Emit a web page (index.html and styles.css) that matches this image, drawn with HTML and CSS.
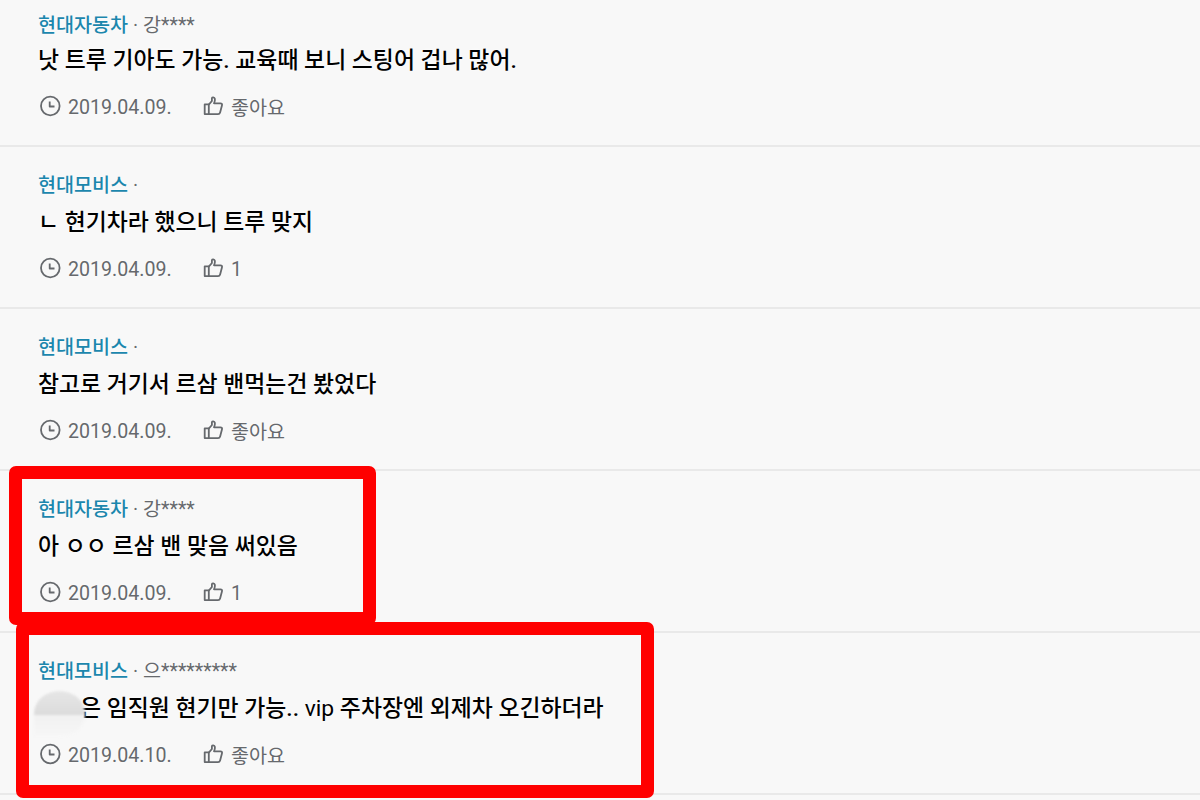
FILE: index.html
```
<!DOCTYPE html>
<html lang="ko">
<head>
    <meta charset="UTF-8">
    <meta name="viewport" content="width=device-width, initial-scale=1.0">
    <title>댓글</title>
    <link rel="stylesheet" href="styles.css">
</head>
<body>
    <!-- Shared icons -->
    <svg class="sprite">
        <symbol id="icon-clock" viewBox="0 0 22 22">
            <circle cx="11.3" cy="11" r="9.3"/>
            <path d="M10.7 6.5v5h4.8"/>
        </symbol>
        <symbol id="icon-like" viewBox="0 0 22 22">
            <path d="M2.7 9.3h4.1v9.8H2.7z"/>
            <path d="M6.8 9.6L9.9 6V3.2c0-1.2 2.6-1.4 3 .8.2 1.4-.2 2.7-.9 4.3h6.4c1.3 0 1.9.9 1.6 2l-1.9 7.1c-.3 1.1-1 1.7-2.1 1.7H6.8"/>
        </symbol>
    </svg>

    <ul class="comments">
        <li class="comment first">
            <p class="writer"><a href="#">현대자동차</a> · 강****</p>
            <p class="text">낫 트루 기아도 가능. 교육때 보니 스팅어 겁나 많어.</p>
            <div class="info">
                <svg class="clock"><use href="#icon-clock"/></svg><span class="date">2019.04.09.</span>
                <svg class="like"><use href="#icon-like"/></svg><span>좋아요</span>
            </div>
        </li>
        <li class="comment">
            <p class="writer"><a href="#">현대모비스</a> ·</p>
            <p class="text">ㄴ 현기차라 했으니 트루 맞지</p>
            <div class="info">
                <svg class="clock"><use href="#icon-clock"/></svg><span class="date">2019.04.09.</span>
                <svg class="like"><use href="#icon-like"/></svg><span class="count">1</span>
            </div>
        </li>
        <li class="comment">
            <p class="writer"><a href="#">현대모비스</a> ·</p>
            <p class="text">참고로 거기서 르삼 밴먹는건 봤었다</p>
            <div class="info">
                <svg class="clock"><use href="#icon-clock"/></svg><span class="date">2019.04.09.</span>
                <svg class="like"><use href="#icon-like"/></svg><span>좋아요</span>
            </div>
        </li>
        <li class="comment">
            <p class="writer"><a href="#">현대자동차</a> · 강****</p>
            <p class="text">아 ㅇㅇ 르삼 밴 맞음 써있음</p>
            <div class="info">
                <svg class="clock"><use href="#icon-clock"/></svg><span class="date">2019.04.09.</span>
                <svg class="like"><use href="#icon-like"/></svg><span class="count">1</span>
            </div>
            <div class="mark mark-short"></div>
        </li>
        <li class="comment">
            <p class="writer"><a href="#">현대모비스</a> · 으*********</p>
            <p class="text erased">은 임직원 현기만 가능.. <span class="latin">vip</span> 주차장엔 외제차 오긴하더라</p>
            <div class="info">
                <svg class="clock"><use href="#icon-clock"/></svg><span class="date">2019.04.10.</span>
                <svg class="like"><use href="#icon-like"/></svg><span>좋아요</span>
            </div>
            <div class="mark mark-long"></div>
        </li>
    </ul>
</body>
</html>
```
FILE: styles.css
```
body {
    font-family: Roboto, "Noto Sans CJK KR", sans-serif;
    background-color: #f8f8f8;
    margin: 0;
    height: 800px;
    overflow: hidden;
}
.sprite {
    display: none;
}
.comments {
    list-style: none;
    margin: 0;
    padding: 0;
}
.comment {
    position: relative;
    box-sizing: border-box;
    height: 162px;
    padding: 23px 38px 0;
    border-bottom: 2px solid #e9e9e9;
    text-shadow: 0 0 3px white;
}
.comment.first {
    height: 147px;
    padding-top: 10px;
}
.comment.first .writer {
    margin-bottom: 1px;
}
.writer {
    margin: 0 0 3px;
    font-size: 19.6px;
    line-height: 32px;
    color: #66696d;
}
.writer a {
    color: #1c87ad;
    font-weight: 500;
    text-decoration: none;
}
.text {
    margin: 0;
    font-size: 22.87px;
    font-weight: 500;
    line-height: 36px;
    color: #000;
}
.latin {
    font-weight: 400;
}
.info {
    display: flex;
    align-items: center;
    height: 32px;
    margin-top: 11px;
    font-size: 19.6px;
    color: #66696d;
}
.info svg {
    width: 22px;
    height: 22px;
    fill: none;
    stroke: #66696d;
    stroke-width: 1.8;
    stroke-linejoin: round;
}
.clock {
    margin: 0 7px 0 1px;
}
.date {
    width: 134px;
    padding-top: 3px;
}
.count {
    padding-top: 2px;
}
.like {
    margin-right: 7px;
}
.erased {
    position: relative;
    padding-left: 42px;
}
/* smudge over the erased name */
.erased::before {
    content: "";
    position: absolute;
    left: -4px;
    top: 0;
    width: 51px;
    height: 46px;
    border-radius: 26px 26px 26px 0 / 23px 23px 23px 0;
    background: linear-gradient(#e6e6e6, #dcdcdc 24px, #f1f1f1 24px, #f7f7f7);
    filter: blur(0.8px);
}
.mark {
    position: absolute;
    box-sizing: border-box;
    border: 13px solid #ff0000;
    border-radius: 7px;
}
.mark-short {
    left: 9px;
    top: -5px;
    width: 367px;
    height: 159px;
}
.mark-long {
    left: 16px;
    top: -11px;
    width: 638px;
    height: 176px;
}
```
